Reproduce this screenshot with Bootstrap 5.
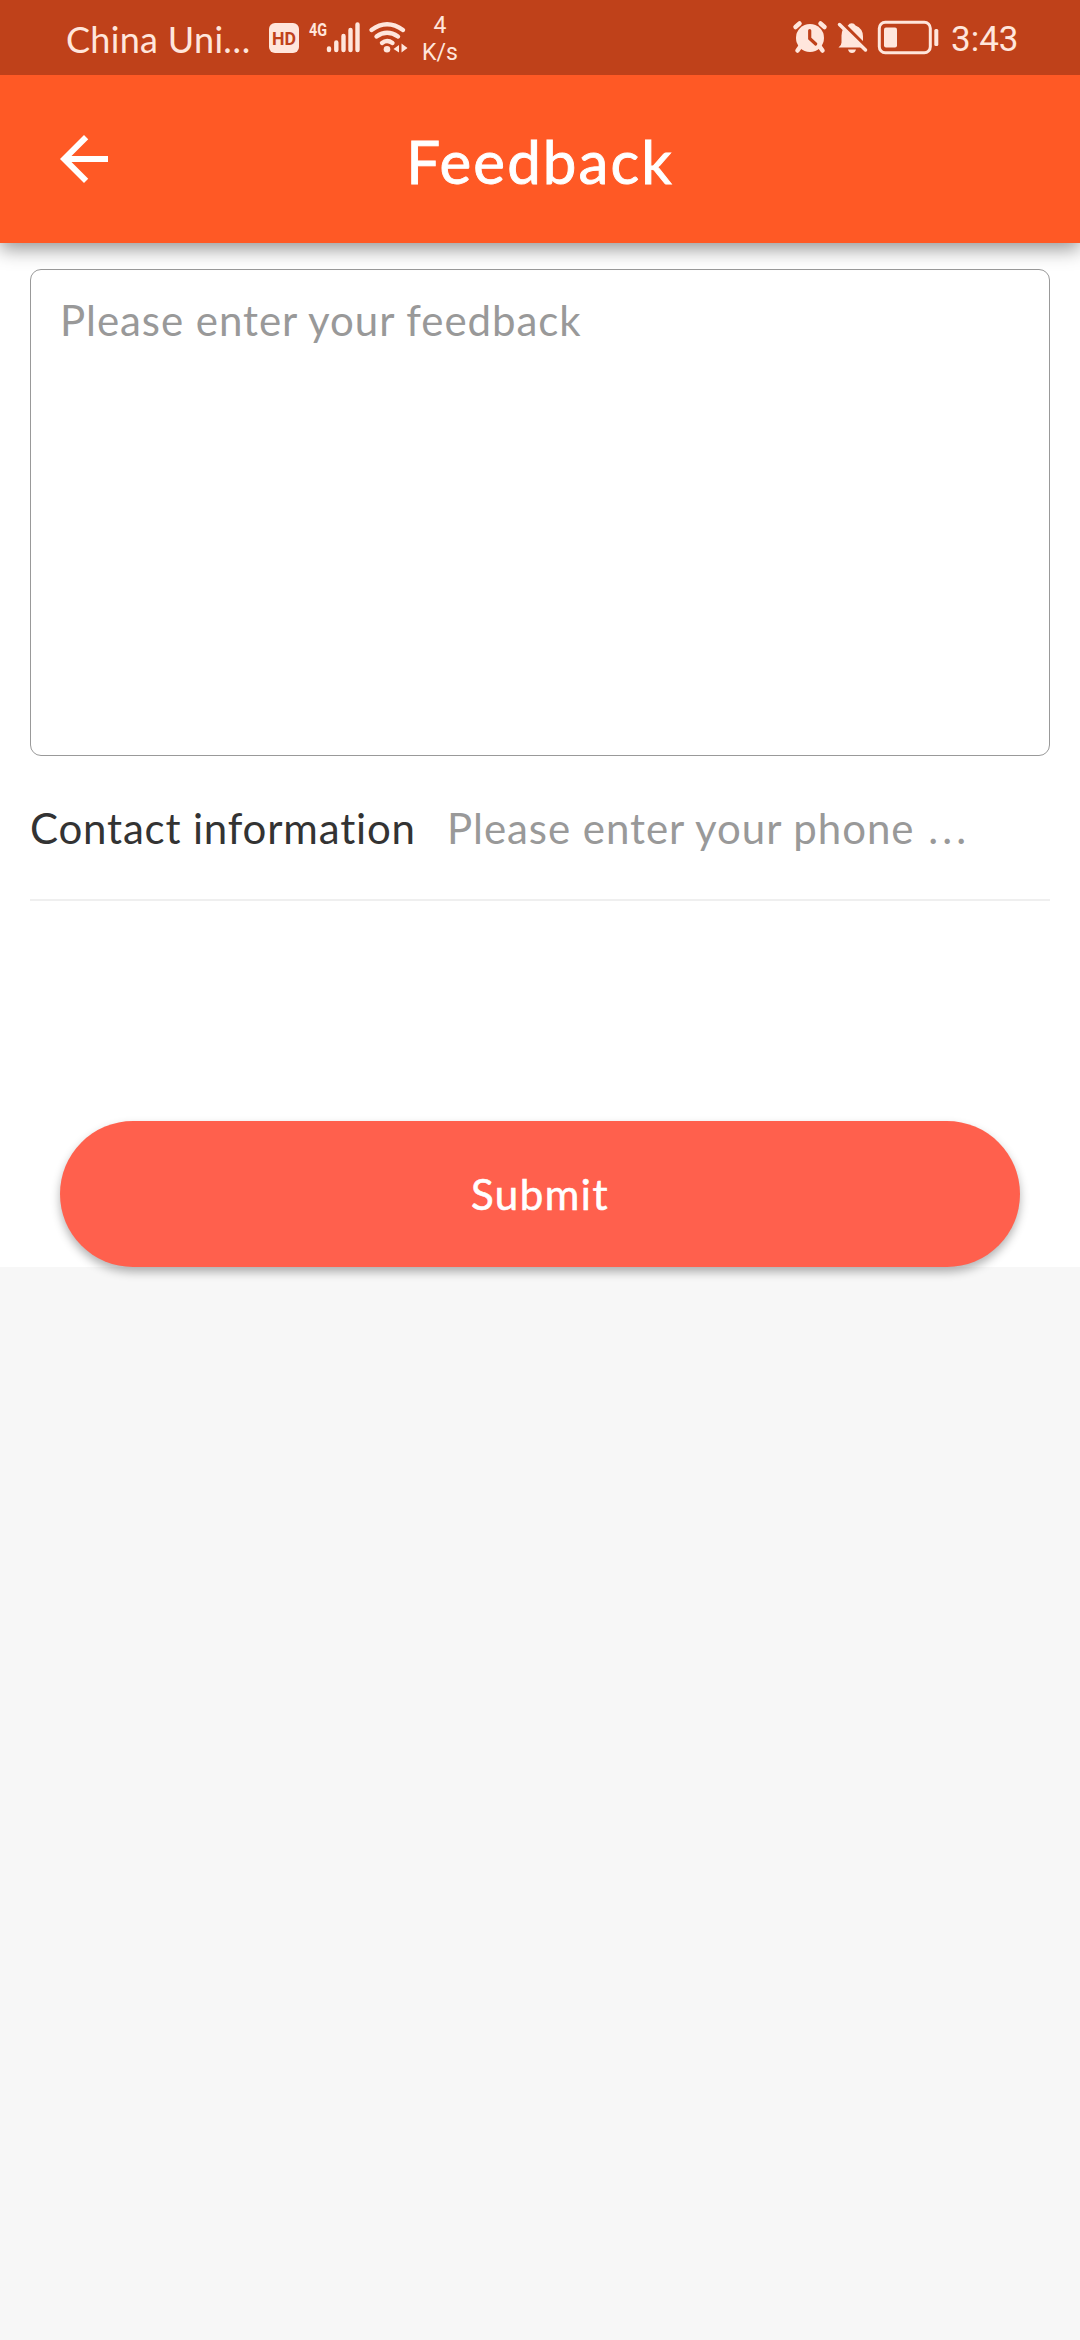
<!DOCTYPE html>
<html lang="en">
<head>
<meta charset="utf-8">
<meta name="viewport" content="width=device-width, initial-scale=1">
<title>Feedback</title>
<link href="https://cdn.jsdelivr.net/npm/bootstrap@5.3.0/dist/css/bootstrap.min.css" rel="stylesheet">
<style>
body { background: #f7f7f7; font-family: Lato, "Open Sans", sans-serif; min-height: 2340px; }
.status-bar { height: 75px; background: #bf411a; color: #ffe6dc; padding: 0 65px 0 66px; z-index: 3; }
.status-bar svg { display: block; flex: none; }
.carrier { font-size: 36px; line-height: 78px; width: 202px; letter-spacing: .3px; white-space: nowrap; }
.net-speed { font: 23px/27px Roboto, sans-serif; width: 36px; margin-left: 12px; padding-top: 12px; }
.net-speed span { display: block; }
.clock { font: 35px/79px Roboto, sans-serif; width: 64px; margin-left: 12px; white-space: nowrap; }
.app-bar { height: 168px; background: #ff5925; box-shadow: 0 6px 18px rgba(0,0,0,.42); z-index: 2; }
.back-btn { left: 60px; top: 60px; line-height: 0; }
.app-title { font-size: 60px; line-height: 172px; letter-spacing: 2.1px; -webkit-text-stroke: .9px #fff; }
.panel { padding: 26px 30px 0; height: 1024px; }
.feedback-box { height: 487px; border: 1px solid #999; border-radius: 11px; padding: 20px 29px; font-size: 42px; line-height: 60px; resize: none; color: #333; letter-spacing: .95px; }
.feedback-box::placeholder { color: #999; opacity: 1; }
.contact-row { height: 145px; border-bottom: 2px solid #efefef; padding-top: 42px; font-size: 42px; line-height: 60px; color: #333; }
.contact-label { width: 417px; letter-spacing: .82px; white-space: nowrap; }
.phone-box { height: 54px; overflow: hidden; color: #999; letter-spacing: .95px; white-space: nowrap; }
.phone-box .trail { letter-spacing: 4.2px; margin-left: 2px; }
.submit-btn { height: 146px; margin: 220px 30px 0; background: #ff604d; color: #fff; font-size: 42px; letter-spacing: 1.5px; border: 0; box-shadow: 0 5px 10px rgba(0,0,0,.3); -webkit-text-stroke: .6px #fff; }
</style>
</head>
<body>
<header>
  <div class="status-bar position-relative d-flex justify-content-between">
    <div class="d-flex">
      <div class="carrier">China Uni…</div>
      <svg width="142" height="75" viewBox="268 0 142 75" fill="#ffe6dc">
        <rect x="269" y="23" width="30" height="30" rx="6"/>
        <text x="272" y="45" font-family="Roboto" font-weight="700" font-size="19" textLength="24" lengthAdjust="spacingAndGlyphs" fill="#bf411a">HD</text>
        <text x="309" y="36" font-family="Roboto" font-weight="700" font-size="19" textLength="18" lengthAdjust="spacingAndGlyphs">4G</text>
        <g stroke="#ffe6dc" stroke-width="4.4" stroke-linecap="round">
          <path d="M329 48.5v1.5M336.3 42.5v7.5M343.5 36v14M350.5 30v20M357.5 24.500v25.500"/>
        </g>
        <g fill="none" stroke="#ffe6dc" stroke-width="4.4" stroke-linecap="round">
          <path d="M371.500 30Q387 18.500 403 30M376.500 36.500Q387 29 398 36.500M382 43Q387 39 392.500 43"/>
        </g>
        <circle cx="387" cy="49.300" r="3.300"/>
        <path d="M399 45v7.500l-5.500-3.500zM401.500 43.500l6 4.500-6 4.500z"/>
      </svg>
      <div class="net-speed text-center"><span>4</span><span>K/s</span></div>
    </div>
    <div class="d-flex">
      <svg width="147" height="75" viewBox="791 0 147 75" fill="#ffe6dc">
        <circle cx="809" cy="38" r="14"/>
        <g stroke="#ffe6dc" stroke-width="4.500" stroke-linecap="round" fill="none">
          <path d="M794.500 27l4-3.500M819.500 23.500l4 3.500M799 47l-2.500 3.500M819 47l2.500 3.500"/>
        </g>
        <path d="M808.700 30.500v8l6 5.500" fill="none" stroke="#bf411a" stroke-width="3.200" stroke-linecap="round"/>
        <path d="M847 25.500a4.200 4.200 0 0 1 7.500 0q7.500 3 7.500 11v7q1 2.500 3.500 4h-28q3-2 3-5v-7q0-7 6.500-10z"/>
        <path d="M847 49.500h8q-1 3.500-4 3.500t-4-3.500z"/>
        <path d="M840 22l26 26" stroke="#bf411a" stroke-width="4"/>
        <path d="M838.500 24.500l26 25.500" stroke="#ffe6dc" stroke-width="3.500" stroke-linecap="round"/>
        <rect x="878.300" y="22.300" width="51" height="30.500" rx="6" fill="none" stroke="#ffe6dc" stroke-width="3"/>
        <rect x="883" y="27.500" width="13" height="20" rx="2"/>
        <rect x="933.300" y="29" width="4" height="17" rx="1.500"/>
      </svg>
      <div class="clock">3:43</div>
    </div>
  </div>
  <nav class="app-bar position-relative text-center text-white">
    <a class="back-btn position-absolute" href="#" aria-label="Back">
      <svg width="48" height="48" viewBox="4 4 16 16"><path fill="#fff" d="M20 11H7.830l5.590-5.590L12 4l-8 8 8 8 1.410-1.410L7.830 13H20z"/></svg>
    </a>
    <div class="app-title">Feedback</div>
  </nav>
</header>
<main class="panel bg-white">
  <textarea class="feedback-box d-block w-100 bg-white" placeholder="Please enter your feedback"></textarea>
  <div class="contact-row d-flex">
    <div class="contact-label flex-shrink-0">Contact information</div>
    <div class="phone-box flex-grow-1" role="textbox" tabindex="0">Please enter your phone <span class="trail">...</span></div>
  </div>
  <div class="d-grid">
    <button class="submit-btn btn rounded-pill" type="button">Submit</button>
  </div>
</main>
<script src="https://cdn.jsdelivr.net/npm/bootstrap@5.3.0/dist/js/bootstrap.bundle.min.js"></script>
</body>
</html>
